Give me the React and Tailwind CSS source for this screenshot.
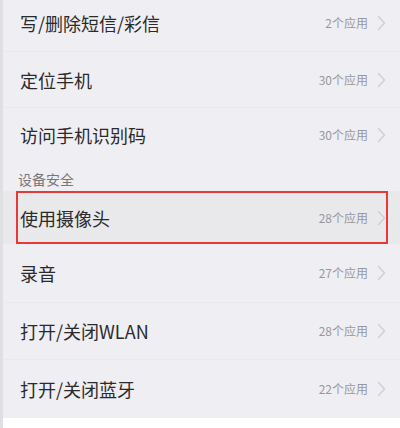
import React from "react";

const font = { fontFamily: '"Noto Sans CJK SC", "Noto Sans", sans-serif' };

function Chevron() {
  return (
    <svg width="9" height="16" viewBox="0 0 9 16" className="ml-[9px] shrink-0">
      <path d="M1.5 1.5 L7.5 8 L1.5 14.5" fill="none" stroke="#cfcfd2" strokeWidth="1.4" strokeLinecap="round" strokeLinejoin="round" />
    </svg>
  );
}

function Row({ title, count, h, highlight, last }) {
  return (
    <div
      className={`relative flex items-center pl-[17px] pr-[14px] ${highlight ? "bg-[#e9e9eb]" : ""} ${last ? "" : "border-b border-[#e9e8ed]"}`}
      style={{ height: h }}
    >
      <span className="flex-1 text-[18px] leading-none text-[#2a2a2c]">{title}</span>
      <span className="text-[12px] leading-none text-[#98989c]">{count}</span>
      <Chevron />
      {highlight && (
        <div className="pointer-events-none absolute left-[13px] right-[12px] top-0 bottom-0 border-2 border-[#e8393a]" />
      )}
    </div>
  );
}

export default function App() {
  return (
    <div className="w-[400px] h-[428px] overflow-hidden bg-[#efeef2] flex flex-col border-l-[3px] border-[#e0dfe4]" style={font}>
      <div className="flex flex-col mt-[-5px]">
        <Row title="写/删除短信/彩信" count="2个应用" h={57} />
        <Row title="定位手机" count="30个应用" h={56} />
        <Row title="访问手机识别码" count="30个应用" h={53} last />
        <div className="h-[30px] flex items-center pl-[15px] pt-[6px] text-[14px] text-[#77777b]">设备安全</div>
        <Row title="使用摄像头" count="28个应用" h={53} highlight last />
        <Row title="录音" count="27个应用" h={59} />
        <Row title="打开/关闭WLAN" count="28个应用" h={57} />
        <Row title="打开/关闭蓝牙" count="22个应用" h={58} last />
      </div>
      <div className="flex-1 bg-white" />
    </div>
  );
}
